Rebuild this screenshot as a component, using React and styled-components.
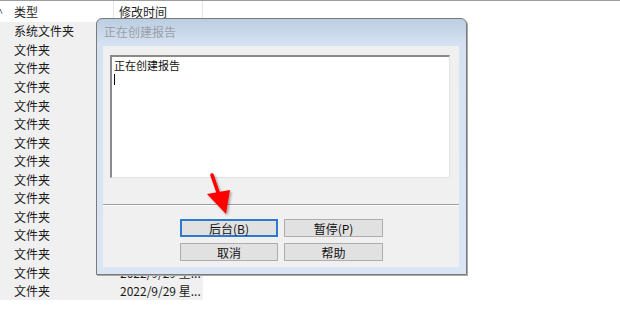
import styled, { createGlobalStyle } from "styled-components";

const GlobalStyle = createGlobalStyle`
  html, body {
    margin: 0;
    padding: 0;
    background: #ffffff;
  }
  body {
    font-family: "Noto Sans CJK SC", "Noto Sans", sans-serif;
    font-size: 12px;
    color: #000;
  }
`;

const rows = ["系统文件夹", ...Array(14).fill("文件夹")];

export default function App() {
  return (
    <>
      <GlobalStyle />
      <Page>
        <FileList>
          <HeaderRow>
            <SortMark>^</SortMark>
            <HeadCell>类型</HeadCell>
            <HeadCell>修改时间</HeadCell>
          </HeaderRow>
          {rows.map((name, i) => (
            <Row key={i}>
              <Cell>{name}</Cell>
              <Cell>2022/9/29 星...</Cell>
            </Row>
          ))}
        </FileList>

        <Dialog>
          <TitleBar>正在创建报告</TitleBar>
          <Client>
            <LogBox>
              <p>正在创建报告</p>
              <Caret />
            </LogBox>
            <Separator />
            <ButtonGrid>
              <Button $focused>后台(B)</Button>
              <Button>暂停(P)</Button>
              <Button>取消</Button>
              <Button>帮助</Button>
            </ButtonGrid>
          </Client>
        </Dialog>

        <Arrow viewBox="0 0 30 44" width="30" height="44">
          <defs>
            <filter id="sh" x="-30%" y="-30%" width="160%" height="160%">
              <feDropShadow dx="1.5" dy="1.5" stdDeviation="1" floodColor="#000" floodOpacity="0.35" />
            </filter>
          </defs>
          <g filter="url(#sh)">
            <path d="M7 2 L15 25" stroke="#ff0000" strokeWidth="3.6" strokeLinecap="round" />
            <path d="M2 21 L25 17 L21 41 Z" fill="#ff0000" />
          </g>
        </Arrow>
      </Page>
    </>
  );
}

const Page = styled.div`
  position: relative;
  width: 620px;
  height: 309px;
  overflow: hidden;
  background: #fff;
`;

const FileList = styled.div`
  display: flex;
  flex-direction: column;
  border-top: 1px solid #9a9ea3;
  width: 620px;
`;

const HeaderRow = styled.div`
  position: relative;
  display: grid;
  grid-template-columns: 114px 89px;
  height: 21px;
  align-items: center;
`;

const SortMark = styled.span`
  position: absolute;
  left: -3px;
  top: 3px;
  font-size: 11px;
  color: #555;
`;

const HeadCell = styled.div`
  height: 21px;
  line-height: 21px;
  padding-left: 14px;
  border-right: 1px solid #e5e5e5;
  color: #1e1e1e;
  &:nth-of-type(2) {
    padding-left: 5px;
  }
`;

const Row = styled.div`
  display: grid;
  grid-template-columns: 114px 89px;
  width: 203px;
  height: 18.57px;
  align-items: center;
  background: #f0f0f0;
  &:first-of-type {
    margin-top: 2px;
  }
`;

const Cell = styled.div`
  padding-left: 14px;
  white-space: nowrap;
  line-height: 18px;
  color: #1a1a1a;
  & + & {
    padding-left: 6px;
  }
`;

const Dialog = styled.div`
  position: absolute;
  left: 96px;
  top: 18px;
  width: 371px;
  height: 257px;
  box-sizing: border-box;
  display: flex;
  flex-direction: column;
  border: 1px solid #7a7a7a;
  border-radius: 6px 6px 0 0;
  background: linear-gradient(#bccee2 0px, #d5e2f1 26px, #dae6f4 100%);
  box-shadow: 1px 1px 0 #a8a8a8;
`;

const TitleBar = styled.div`
  height: 26px;
  line-height: 26px;
  padding-left: 7px;
  flex-shrink: 0;
  color: #9aa0a6;
  font-size: 12px;
`;

const Client = styled.div`
  flex: 1;
  margin: 1px 7px 7px 6px;
  background: #f0f0f0;
  display: flex;
  flex-direction: column;
`;

const LogBox = styled.div`
  margin: 9px 9px 0 7px;
  height: 123px;
  box-sizing: border-box;
  background: #fff;
  border-top: 2px solid #8a8a8a;
  border-left: 2px solid #8a8a8a;
  border-right: 1px solid #e3e3e3;
  border-bottom: 1px solid #e3e3e3;
  padding: 1px 2px;

  p {
    margin: 0;
    font-size: 11px;
    line-height: 14px;
    color: #111;
  }
`;

const Caret = styled.div`
  width: 1px;
  height: 11px;
  margin-top: 2px;
  background: #000;
`;

const Separator = styled.div`
  margin-top: 26px;
  height: 1px;
  background: #a0a0a0;
  border-bottom: 1px solid #fff;
`;

const ButtonGrid = styled.div`
  display: grid;
  grid-template-columns: 98px 99px;
  grid-auto-rows: 18px;
  column-gap: 6px;
  row-gap: 6px;
  margin: 13px 0 0 77px;
`;

const Button = styled.div`
  box-sizing: border-box;
  display: flex;
  align-items: center;
  justify-content: center;
  background: #e1e1e1;
  border: ${(p) => (p.$focused ? "2px solid #2a7bd0" : "1px solid #adadad")};
  font-size: 12px;
  color: #111;
`;

const Arrow = styled.svg`
  position: absolute;
  left: 205px;
  top: 173px;
  overflow: visible;
`;
